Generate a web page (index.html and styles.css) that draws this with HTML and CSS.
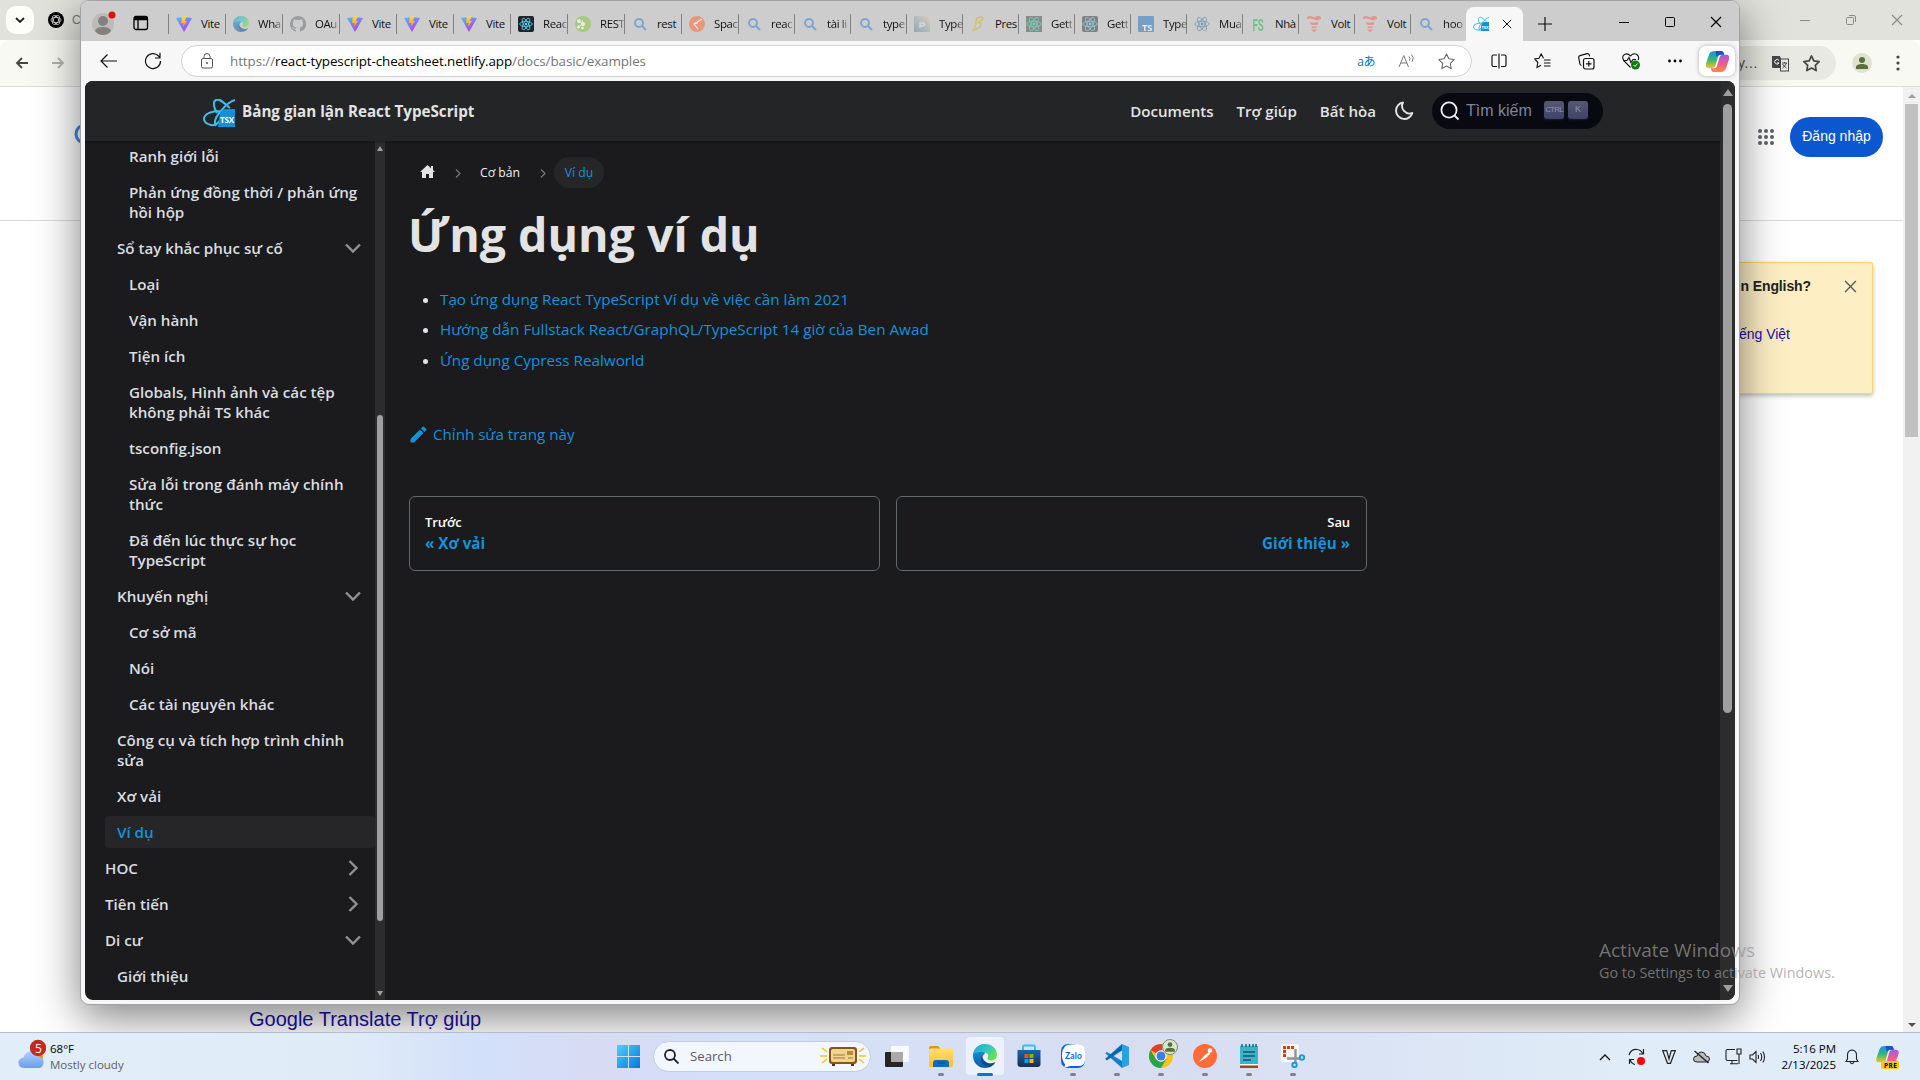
FILE: index.html
```html
<!DOCTYPE html>
<html lang="vi">
<head>
<meta charset="utf-8">
<title>Bảng gian lận React TypeScript</title>
<link rel="stylesheet" href="styles.css">
</head>
<body>
<svg class="defs" width="0" height="0" aria-hidden="true">
  <defs>
    <linearGradient id="gv" x1="0" y1="0" x2=".6" y2="1"><stop offset="0" stop-color="#41c8ff"/><stop offset="1" stop-color="#bd34fe"/></linearGradient>
    <linearGradient id="gb" x1="0" y1="0" x2="0" y2="1"><stop offset="0" stop-color="#ffe03a"/><stop offset="1" stop-color="#ffa000"/></linearGradient>
    <linearGradient id="ge1" x1="0" y1="0" x2="1" y2=".6"><stop offset="0" stop-color="#1ba7e0"/><stop offset=".55" stop-color="#2fc5c5"/><stop offset="1" stop-color="#6be04e"/></linearGradient>
    <linearGradient id="ge2" x1="0" y1="0" x2="0" y2="1"><stop offset="0" stop-color="#1b9de2"/><stop offset="1" stop-color="#0f5cae"/></linearGradient>
    <linearGradient id="gc1" x1="0" y1="0" x2="0" y2="1"><stop offset="0" stop-color="#1a8fe8"/><stop offset=".5" stop-color="#35b779"/><stop offset="1" stop-color="#f3c716"/></linearGradient>
    <linearGradient id="gc2" x1="0" y1="0" x2="0" y2="1"><stop offset="0" stop-color="#a259e6"/><stop offset=".5" stop-color="#ee5a8d"/><stop offset="1" stop-color="#fb8b4b"/></linearGradient>
    <linearGradient id="gw" x1="0" y1="0" x2="1" y2="1"><stop offset="0" stop-color="#4cd0fb"/><stop offset="1" stop-color="#0a75d6"/></linearGradient>
    <linearGradient id="gf" x1="0" y1="0" x2="0" y2="1"><stop offset="0" stop-color="#ffdf72"/><stop offset="1" stop-color="#fcbf2c"/></linearGradient>
    <linearGradient id="gs" x1="0" y1="0" x2="0" y2="1"><stop offset="0" stop-color="#1068ae"/><stop offset="1" stop-color="#1c2e52"/></linearGradient>
    <linearGradient id="gcl" x1="0" y1="0" x2="0" y2="1"><stop offset="0" stop-color="#b3d2fb"/><stop offset="1" stop-color="#6d9ceb"/></linearGradient>
    <linearGradient id="gt" x1="0" y1="1" x2="1" y2="0"><stop offset="0" stop-color="#5f8ca6"/><stop offset="1" stop-color="#e0cdb8"/></linearGradient>
    <symbol id="vite" viewBox="0 0 16 16"><path d="M0 2 8 .9 16 2 8 16Z" fill="url(#gv)"/><path d="M10.8 0 5.6 1.2 5.2 7h2.3L6.9 11 11 5H8.8Z" fill="url(#gb)"/></symbol>
    <symbol id="edge" viewBox="0 0 24 24"><path d="M12 0a12 12 0 0 0-12 12 12 12 0 0 0 12 12c3 0 6-1.200 8-3-6 2-11-1-11-6 0-2 1-4 2.500-5L12 8Z" fill="url(#ge2)"/><path d="M0 11C1 4 6 0 12 0c7 0 12 5 12 10.500 0 4-3 6-6 6-2.500 0-4-1-3.500-2.500C16 12 15 8.200 10 8 5 7.800 1 9 0 11Z" fill="url(#ge1)"/><path d="M9 11c-3 6 1 12 8 12 2.500-1 5-3.500 5.500-5-6 3.500-13 0-13.500-7Z" fill="#114a8b"/></symbol>
    <symbol id="github" viewBox="0 0 16 16"><path fill="#70757c" d="M8 0a8 8 0 0 0-2.500 15.600c.4.100.5-.2.500-.4v-1.500c-2.200.5-2.700-.9-2.700-.9-.4-1-.9-1.200-.9-1.200-.7-.5.100-.5.100-.5.800.1 1.200.8 1.200.8.700 1.200 1.900.9 2.300.7.100-.5.300-.9.500-1.100-1.800-.2-3.600-.9-3.600-4 0-.9.300-1.600.8-2.100-.1-.3-.4-1.100.1-2.200 0 0 .7-.2 2.200.8a7.500 7.500 0 0 1 4 0c1.500-1 2.200-.8 2.200-.8.500 1.100.2 1.900.1 2.200.5.500.8 1.200.8 2.100 0 3.100-1.900 3.800-3.600 4 .3.300.5.800.5 1.500v2.200c0 .2.200.5.600.4A8 8 0 0 0 8 0Z"/></symbol>
    <symbol id="react" viewBox="0 0 16 16"><g fill="none" stroke="currentColor" stroke-width=".9"><ellipse cx="8" cy="8" rx="7.300" ry="2.800"/><ellipse cx="8" cy="8" rx="7.300" ry="2.800" transform="rotate(60 8 8)"/><ellipse cx="8" cy="8" rx="7.300" ry="2.800" transform="rotate(120 8 8)"/></g><circle cx="8" cy="8" r="1.400" fill="currentColor"/></symbol>
    <symbol id="reactdark" viewBox="0 0 16 16"><rect width="16" height="16" rx="2" fill="#20232a"/><use href="#react" x="1" y="1" width="14" height="14"/></symbol>
    <symbol id="rest" viewBox="0 0 16 16"><circle cx="8" cy="8" r="8" fill="#8cc63f"/><g fill="#fff" stroke="#fff"><path d="M4 5 8 8 3 11M8 8l-1-4" fill="none"/><circle cx="4" cy="5" r="1.500"/><circle cx="8" cy="8" r="1.700"/><circle cx="3.500" cy="11" r="1.200"/><circle cx="7.500" cy="12" r="1"/></g></symbol>
    <symbol id="glass" viewBox="0 0 16 16"><g fill="none" stroke="#3a86d6" stroke-width="2"><circle cx="7" cy="7" r="4"/><path d="m10 10 4 4"/></g></symbol>
    <symbol id="space" viewBox="0 0 16 16"><circle cx="8" cy="8" r="8" fill="#ff6c37"/><path d="M13 3 5 8l4 5M5 8l4-1" stroke="#fff" stroke-width="1.200" fill="none"/></symbol>
    <symbol id="tile" viewBox="0 0 16 16"><path fill="url(#gt)" d="M0 0h16v16H0z"/><path d="M6 12V7h3a1 1 0 0 1 0 3H6" stroke="#d8f0ee" fill="none" stroke-width="1.300"/></symbol>
    <symbol id="bolt" viewBox="0 0 16 16"><path d="M4 15 7 2l5-1q2 1 0 3L8 7q4-1 3 2-1 3-5 4L2 15" fill="none" stroke="#d9b928" stroke-width="1.600"/></symbol>
    <symbol id="volt" viewBox="0 0 16 16"><path d="M1 1q3-2 7 .5Q12-1 15 1v2Q11 5 8 3.500T1 3ZM4 6q4 1.500 8 0v2.500Q9 9.500 5 8.500ZM5 10.500h6l-1 1.500H6ZM5 13q4 1 6 0-1 3-3 3t-3-3Z" fill="#f26c5c"/></symbol>
    <symbol id="tsx" viewBox="0 0 32 28"><g fill="none" stroke="#3fbcec" stroke-width="2"><path d="M32 1C27 2 22 7 17 13s-6 11-4 14M14 14C10 8 10 2 13 1c4-2 9 4 14 8M18 12C8 12 1 15 1 20c0 3 3 5 7 6 4 1 8-2 11-8"/></g><path d="M17 14q2-4 6-4h9v18H15Z" fill="#178fd5"/><text x="17" y="24" font-family="Open Sans" font-size="8" font-weight="700" fill="#fff" textLength="14">TSX</text></symbol>
    <symbol id="star" viewBox="0 0 16 16"><path d="m8 .9 2.200 4.600 5 .7-3.600 3.500.8 5L8 12.300l-4.400 2.400.8-5L.8 6.200l5-.7Z" fill="none" stroke="currentColor" stroke-linejoin="round"/></symbol>
    <symbol id="x" viewBox="0 0 12 12"><path d="m1 1 10 10M11 1 1 11" stroke="currentColor" stroke-width="1.200"/></symbol>
    <symbol id="copilot" viewBox="0 0 24 22"><path d="M10 0h6c2 0 2.500 2 3 4h-4c-2 0-2.500 2-3 4l-2 7c-.5 2-2 3-4 3H3c-3 0-4-2-3-5L3 4c1-3 3-4 7-4Z" fill="url(#gc1)"/><path d="M14 22H8c-2 0-2.500-2-3-4h4c2 0 2.500-2 3-4l2-7c.5-2 2-3 4-3h3c3 0 4 2 3 5l-3 9c-1 3-3 4-7 4Z" fill="url(#gc2)"/><path d="M10 0h6c2 0 2.500 2 3 4h-5l-3 2Z" fill="#1556c4"/></symbol>
    <symbol id="person" viewBox="0 0 20 20"><circle cx="10" cy="10" r="10" fill="#dde3cf"/><circle cx="10" cy="7" r="3" fill="#58703a"/><path d="M4 16v-2c0-2 3-3 6-3s6 1 6 3v2Z" fill="#58703a"/></symbol>
    <symbol id="down" viewBox="0 0 16 16"><path d="m1 4.500 7 7 7-7" fill="none" stroke="#909193" stroke-width="2.400"/></symbol>
    <symbol id="right" viewBox="0 0 16 16"><path d="m4.500 1 7 7-7 7" fill="none" stroke="#909193" stroke-width="2.400"/></symbol>
  </defs>
</svg>

<div class="desktop">
  <section class="chrome">
    <header class="c-tabs">
      <div class="c-left"><span class="c-menu"><svg width="10" height="6"><path d="m1 1 4 4 4-4" fill="none" stroke="#222" stroke-width="1.800"/></svg></span>
        <svg class="c-gpt" width="16" height="16"><circle cx="8" cy="8" r="8"/><g fill="none" stroke="#ddd" stroke-width=".8"><ellipse cx="8" cy="8" rx="5" ry="2.600"/><ellipse cx="8" cy="8" rx="5" ry="2.600" transform="rotate(60 8 8)"/><ellipse cx="8" cy="8" rx="5" ry="2.600" transform="rotate(120 8 8)"/></g></svg><span>C</span></div>
      <div class="c-ctl"><svg width="12" height="12"><path d="M1 6.500h10" stroke="#8b8c87"/></svg><svg width="12" height="12" fill="none" stroke="#8b8c87"><rect x="1.500" y="3.500" width="7" height="7" rx="1"/><path d="M4 1.500h5q1.500 0 1.500 1.500v5"/></svg><svg width="12" height="12" color="#8b8c87"><use href="#x"/></svg></div>
    </header>
    <div class="c-bar">
      <div class="c-nav"><svg width="14" height="12" fill="none" stroke="#44483f" stroke-width="1.800"><path d="M13 6H2M7 1 2 6l5 5"/></svg><svg width="14" height="12" fill="none" stroke="#b0b1aa" stroke-width="1.800"><path d="M1 6h11M7 1l5 5-5 5"/></svg></div>
      <div class="c-addr"><span>vy...</span><svg width="17" height="17"><path d="M0 1h8l4 12H1q-1 0-1-1Z" fill="#44474a"/><rect x="8.500" y="4" width="8" height="12" fill="#e9e9e3" stroke="#44474a"/><path d="M10 8h5M12.500 7v1m2 0q-1 3-4 5m0-4q1 2 4 4" stroke="#44474a" fill="none"/><path d="M7 5.500A2.300 2.300 0 1 0 7 8H5" stroke="#fff" fill="none"/></svg><svg class="c-star" width="17" height="17"><use href="#star"/></svg></div>
      <svg width="20" height="20"><use href="#person"/></svg>
      <svg width="4" height="16" fill="#444"><circle cx="2" cy="2" r="1.600"/><circle cx="2" cy="8" r="1.600"/><circle cx="2" cy="14" r="1.600"/></svg>
    </div>
    <div class="c-view">
      <div class="c-page">
        <div class="g-head"><svg class="g-logo" width="22" height="22"><circle cx="11" cy="11" r="9" fill="none" stroke="#4285f4" stroke-width="3"/></svg>
          <svg class="g-grid" width="16" height="16" fill="#5f6368"><g id="r3"><circle cx="2" cy="2" r="2"/><circle cx="8" cy="2" r="2"/><circle cx="14" cy="2" r="2"/></g><use href="#r3" y="6"/><use href="#r3" y="12"/></svg><span class="g-sign">Đăng nhập</span></div>
        <div class="g-note"><div class="g-q"><b>in English?</b><svg width="13" height="13" color="#555"><use href="#x"/></svg></div><div class="g-lang">Tiếng Việt</div></div>
        <div class="g-foot">Google Translate Trợ giúp</div>
      </div>
      <div class="c-scroll"><i class="up"></i><div class="c-thumb"></div><i class="dn"></i></div>
    </div>
  </section>

  <section class="win">
    <header class="tabs">
      <div class="t-prof"><svg width="24" height="26"><circle cx="11" cy="14" r="11" fill="#bdbbb9"/><circle cx="11" cy="11" r="5" fill="#85807d"/><path d="M3 21q1-4 8-4t8 4q-3 4-8 4t-8-4Z" fill="#85807d"/><circle cx="20" cy="5" r="3.500" fill="#e00b0b"/></svg>
      <svg width="16" height="16" fill="none" stroke="#000" stroke-width="1.300"><rect x="1" y="1.500" width="13.500" height="13" rx="2"/><path d="M1 4.500h13.500M5 4.500v10" /><path d="M1.500 3h12.500" stroke-width="3"/></svg></div>
      <div class="tab w"><svg><use href="#vite"/></svg><span>Vite</span></div>
      <div class="tab w dim"><svg><use href="#edge"/></svg><span class="f">Wha</span></div>
      <div class="tab w dim"><svg><use href="#github"/></svg><span class="f">OAu</span></div>
      <div class="tab w"><svg><use href="#vite"/></svg><span>Vite</span></div>
      <div class="tab w"><svg><use href="#vite"/></svg><span>Vite</span></div>
      <div class="tab w"><svg><use href="#vite"/></svg><span>Vite</span></div>
      <div class="tab w"><svg color="#61dafb"><use href="#reactdark"/></svg><span class="f">Reac</span></div>
      <div class="tab w dim"><svg><use href="#rest"/></svg><span class="f">REST</span></div>
      <div class="tab w dim"><svg><use href="#glass"/></svg><span>rest</span></div>
      <div class="tab w dim"><svg><use href="#space"/></svg><span class="f">Spac</span></div>
      <div class="tab dim"><svg><use href="#glass"/></svg><span class="f">reac</span></div>
      <div class="tab dim"><svg><use href="#glass"/></svg><span class="f">tài li</span></div>
      <div class="tab dim"><svg><use href="#glass"/></svg><span class="f">type</span></div>
      <div class="tab dim"><svg><use href="#tile"/></svg><span class="f">Type</span></div>
      <div class="tab dim"><svg><use href="#bolt"/></svg><span>Pres</span></div>
      <div class="tab dim"><svg><rect width="16" height="16" fill="#555"/><g color="#2fd0a5"><use href="#react"/></g></svg><span class="f">Gett</span></div>
      <div class="tab dim"><svg><rect width="16" height="16" rx="2" fill="#444"/><g color="#61bfdb"><use href="#react"/></g></svg><span class="f">Gett</span></div>
      <div class="tab dim"><svg><rect width="16" height="16" rx="1" fill="#3178c6"/><text x="4" y="14.500" font-family="Open Sans" font-size="9.500" font-weight="700" fill="#fff">TS</text></svg><span class="f">Type</span></div>
      <div class="tab dim"><svg color="#3d7a9e"><use href="#react"/></svg><span class="f">Mua</span></div>
      <div class="tab dim"><svg><text x="2.500" y="14.500" font-family="Roboto" font-size="17" font-weight="700" fill="#2fb457" textLength="11" lengthAdjust="spacingAndGlyphs">FS</text></svg><span>Nhà</span></div>
      <div class="tab dim"><svg><use href="#volt"/></svg><span>Volt</span></div>
      <div class="tab dim"><svg><use href="#volt"/></svg><span>Volt</span></div>
      <div class="tab dim"><svg><use href="#glass"/></svg><span class="f">hoo</span></div>
      <div class="tab active"><svg><use href="#tsx"/></svg><svg class="tx"><use href="#x"/></svg></div>
      <svg class="plus" width="14" height="14"><path d="M7 0v14M0 7h14" stroke="#111" stroke-width="1.200"/></svg>
      <div class="ctl"><svg width="12" height="12"><path d="M1 6.500h10" stroke="#000"/></svg><svg width="12" height="12"><rect x="1.500" y="1.500" width="9" height="9" rx="1" fill="none" stroke="#000"/></svg><svg width="12" height="12"><use href="#x"/></svg></div>
    </header>
    <div class="bar">
      <div class="b-nav"><svg width="17" height="14" fill="none" stroke="#111" stroke-width="1.200"><path d="M17 7H1M7.500.5 1 7l6.500 6.500"/></svg><svg width="18" height="18" fill="none" stroke="#111" stroke-width="1.200"><path d="M16.500 9A7.500 7.500 0 1 1 14.500 4L16 6M16 .8V6h-5"/></svg></div>
      <div class="addr"><svg width="12" height="16" fill="none" stroke="#555"><rect x=".5" y="5.500" width="11" height="9.500" rx="1.500"/><path d="M3 5.500V3.500a3 3 0 0 1 6 0v2"/><circle cx="6" cy="10" r=".6" fill="#555"/></svg>
        <span class="url">https://<b>react-typescript-cheatsheet.netlify.app</b>/docs/basic/examples</span>
        <span class="tr">aあ</span>
        <svg class="read" width="18" height="16" fill="none" stroke="#777"><path d="M1 14 5.800 2.500 10.500 14M2.800 10h6M11 3.500q1.500 1.500.5 4M13.500 1.500q3 3 .8 7"/></svg>
        <svg class="fav" width="17" height="17"><use href="#star"/></svg></div>
      <div class="b-ico">
        <svg width="16" height="16" fill="none" stroke="#111" stroke-width="1.200"><path d="M6 2H2.500Q1 2 1 3.500v8.500Q1 13.500 2.500 13.500H6M10 2h3.500Q15 2 15 3.500v8.500q0 1.500-1.500 1.500H10M8 .5v15"/></svg>
        <svg width="17" height="16" fill="none" stroke="#111" stroke-width="1.100"><path d="M9.500 5.200 7.200.9 5 5.300l-4.400.6L3.800 9.300 3 14.500l4-2.300M10 7h6.500M10 10h6.500M10 13h6.500"/></svg>
        <svg width="17" height="17" fill="none" stroke="#111" stroke-width="1.200"><rect x="5.500" y="5.500" width="10.500" height="10.500" rx="2"/><path d="M3.500 12.500Q2 12 1.800 10.500L.7 4.500Q.6 3 2 2.700l7-2Q10.800.4 11.300 2l.3 1.300M10.800 8v5.500M8 10.800h5.500"/></svg>
        <svg width="18" height="17"><path d="M8.500 14.500 2 8Q-1 3 3 1.200 6 0 8.500 3 11-.1 14.500 1.200 18 4 16 7M1 7.500h4l2-3 2 5 2-3h3" fill="none" stroke="#111" stroke-width="1.100"/><circle cx="13.500" cy="12" r="4.500" fill="#107c10"/><path d="m11.500 12 1.500 1.500 2.500-3" stroke="#fff" fill="none"/></svg>
        <svg width="16" height="16"><circle cx="2.500" cy="8" r="1.400"/><circle cx="8" cy="8" r="1.400"/><circle cx="13.500" cy="8" r="1.400"/></svg>
      </div>
      <span class="cop"><svg width="23" height="21"><use href="#copilot"/></svg></span>
    </div>
    <div class="view">
      <div class="site">
        <nav class="navbar">
          <svg class="logo" width="32" height="28"><use href="#tsx"/></svg><b class="brand">Bảng gian lận React TypeScript</b>
          <div class="links"><span>Documents</span><span>Trợ giúp</span><span>Bất hòa</span></div>
          <svg class="moon" width="20" height="20"><path d="M9 1.500A8.300 8.300 0 1 0 18.300 12 7.500 7.500 0 0 1 9 1.500Z" fill="none" stroke="#e3e3e3" stroke-width="1.900" stroke-linejoin="round"/></svg>
          <div class="search"><svg width="20" height="20" fill="none" stroke="#f0f1f4" stroke-width="1.800"><circle cx="9" cy="9" r="7.600"/><path d="m14.500 14.500 4 4"/></svg><span>Tìm kiếm</span><kbd class="narrow">CTRL</kbd><kbd>K</kbd></div>
        </nav>
        <div class="docs">
          <aside class="menu">
            <ul>
              <li class="l3">Ranh giới lỗi</li>
              <li class="l3">Phản ứng đồng thời / phản ứng<br>hồi hộp</li>
              <li class="l2">Sổ tay khắc phục sự cố<svg><use href="#down"/></svg></li>
              <li class="l3">Loại</li>
              <li class="l3">Vận hành</li>
              <li class="l3">Tiện ích</li>
              <li class="l3">Globals, Hình ảnh và các tệp<br>không phải TS khác</li>
              <li class="l3">tsconfig.json</li>
              <li class="l3">Sửa lỗi trong đánh máy chính<br>thức</li>
              <li class="l3">Đã đến lúc thực sự học<br>TypeScript</li>
              <li class="l2">Khuyến nghị<svg><use href="#down"/></svg></li>
              <li class="l3">Cơ sở mã</li>
              <li class="l3">Nói</li>
              <li class="l3">Các tài nguyên khác</li>
              <li class="l2">Công cụ và tích hợp trình chỉnh<br>sửa</li>
              <li class="l2">Xơ vải</li>
              <li class="l2 on">Ví dụ</li>
              <li class="l1">HOC<svg><use href="#right"/></svg></li>
              <li class="l1">Tiên tiến<svg><use href="#right"/></svg></li>
              <li class="l1">Di cư<svg><use href="#down"/></svg></li>
              <li class="l2">Giới thiệu</li>
            </ul>
            <div class="m-scroll"><i class="up"></i><div class="m-thumb"></div><i class="dn"></i></div>
          </aside>
          <main>
            <div class="crumbs">
              <svg class="home" width="15" height="13"><path d="M7.500 0 0 7h2v6h4V9h3v4h4V7h2l-2-1.900V1h-2v2.200Z" fill="#e3e3e3"/></svg>
              <svg class="sep" width="6" height="9"><path d="m1 .5 4 4-4 4" fill="none" stroke="#777" stroke-width="1.200"/></svg>
              <span class="cb">Cơ bản</span>
              <svg class="sep s2" width="6" height="9"><path d="m1 .5 4 4-4 4" fill="none" stroke="#777" stroke-width="1.200"/></svg>
              <span class="pill">Ví dụ</span>
            </div>
            <h1>Ứng dụng ví dụ</h1>
            <ul class="list">
              <li><a>Tạo ứng dụng React TypeScript Ví dụ về việc cần làm 2021</a></li>
              <li><a>Hướng dẫn Fullstack React/GraphQL/TypeScript 14 giờ của Ben Awad</a></li>
              <li><a>Ứng dụng Cypress Realworld</a></li>
            </ul>
            <div class="edit"><svg width="17" height="17" viewBox="0 0 17 17"><path d="M.5 13v3.500H4L13.500 7 10 3.500ZM16.200 4.300a1 1 0 0 0 0-1.300L14 .8a1 1 0 0 0-1.300 0L11 2.500 14.500 6Z" fill="#1492dc"/></svg><span>Chỉnh sửa trang này</span></div>
            <div class="pager"><div class="pg"><small>Trước</small><b>« Xơ vải</b></div><div class="pg next"><small>Sau</small><b>Giới thiệu »</b></div></div>
          </main>
        </div>
      </div>
      <div class="scroll"><i class="up"></i><div class="thumb"></div><i class="dn"></i></div>
    </div>
  </section>

  <div class="watermark"><div class="w1">Activate Windows</div><div class="w2">Go to Settings to activate Windows.</div></div>

  <footer class="taskbar">
    <div class="weather"><svg width="28" height="34"><circle cx="19" cy="18" r="6" fill="#f58a1f"/><path d="M6 29q-6-.5-5.500-6 .5-4 5-4.500Q8 12 13.500 12t8 6Q26 19 25.500 24q-.5 5-5 5Z" fill="url(#gcl)"/><circle cx="20" cy="9" r="8.200" fill="#c42b1c"/><text x="17" y="13.500" font-family="Open Sans" font-size="12" fill="#fff">5</text></svg><div><div>68°F</div><div class="wc">Mostly cloudy</div></div></div>
    <div class="apps">
      <svg class="start" width="23" height="23" fill="url(#gw)"><path d="M0 0h11v11H0zM12 0h11v11H12zM0 12h11v11H0zM12 12h11v11H12z"/></svg>
      <div class="find"><svg width="15" height="15" fill="none" stroke="#222" stroke-width="1.800"><circle cx="6" cy="6" r="5"/><path d="m9.500 9.500 5 5"/></svg><span>Search</span>
        <svg class="radio" width="46" height="20"><path d="m2 2 5 4M0 10h7M2 17l5-4M44 2l-5 4M46 10h-7M44 17l-5-4" stroke="#f5c518" stroke-width="1.500"/><rect x="9" y="1" width="28" height="17" rx="3" fill="#8a5416"/><rect x="11" y="3" width="24" height="13" rx="2" fill="#efd58f"/><path d="M13 9h12M13 12h12M28 12h5" stroke="#a9772c"/><path d="M27 5h6v4h-6z" fill="#b98a3c"/><path d="M12 18h3v2h-3zM31 18h3v2h-3z" fill="#5a3208"/></svg></div>
      <div class="app"><svg width="24" height="24"><rect x="0" y="8" width="18" height="15" rx="1" fill="#262626"/><rect x="6" y="2" width="18" height="16" rx="1" fill="#fff" opacity=".85"/><path d="M6 8h12v10H6z" fill="#aaa"/></svg></div>
      <div class="app run"><svg width="24" height="24"><path d="M0 4q0-2 2-2h7l3 3v4H0Z" fill="#d99a10"/><rect y="4.500" width="24" height="18.500" rx="1.500" fill="url(#gf)"/><path d="M4 23v-4q0-3 3-3h10q3 0 3 3v4Z" fill="#0f6cbd"/><path d="M8 19h8" stroke="#0a4a86"/></svg></div>
      <div class="app run cur"><svg width="24" height="24"><use href="#edge"/></svg></div>
      <div class="app"><svg width="24" height="24"><path d="M6 7V3q0-1.500 1.500-1.500h9Q18 1.500 18 3v4" fill="none" stroke="#35c1f1" stroke-width="2"/><path d="M.5 6h23v14q0 3-3 3h-17q-3 0-3-3Z" fill="url(#gs)"/><path d="M7.500 10h4v4h-4z" fill="#f25022"/><path d="M12.500 10h4v4h-4z" fill="#7fba00"/><path d="M7.500 15h4v4h-4z" fill="#00a4ef"/><path d="M12.500 15h4v4h-4z" fill="#ffb900"/></svg></div>
      <div class="app run"><svg width="24" height="24"><rect width="24" height="24" rx="7" fill="#0a63e6"/><path d="M5 1.500Q9 0 17 0q7 0 7 7v9q0 6-7 6H9q-3 1.500-6 1 1.500-1 1-2.500-3-4-3-9.500 0-6 4-9.500Z" fill="#fff"/><text x="4" y="14.500" font-family="Lato" font-size="8.500" font-weight="700" fill="#0a63e6" textLength="17">Zalo</text></svg></div>
      <div class="app run"><svg width="24" height="24"><path d="M17 0 5.500 11 2 8.300.3 9.200 17 24V17L3 5" fill="none"/><path d="M17 24 .3 9.200 2 8 17 17Z" fill="#1380c6"/><path d="M0 15 17 0v6.500L2 16.200Z" fill="#0b67ab"/><path d="m17 0 7 3v18l-7 3Z" fill="#2a9fe3"/></svg></div>
      <div class="app run"><svg class="wide" width="30" height="30" viewBox="0 -5 30 30"><circle cx="12" cy="12" r="12" fill="#fbc116"/><path d="M12 12 1.600 6A12 12 0 0 1 22.400 6H12Z" fill="#e33b2e"/><path d="M1.600 6A12 12 0 0 0 12 24l5.200-9-10.400 0Z" fill="#2ba24c"/><circle cx="12" cy="12" r="5.700" fill="#fff"/><circle cx="12" cy="12" r="4.500" fill="#3b7ded"/><use href="#person" x="13" y="-5" width="16" height="16"/><circle cx="21" cy="3" r="7.500" fill="none" stroke="#7b8a66"/></svg></div>
      <div class="app run"><svg width="24" height="24"><circle cx="12" cy="12" r="12" fill="#ff6c37"/><path d="m5 19 7-8 4-3 1 2-4 4-7 4Z" fill="#fff"/><circle cx="17" cy="6.500" r="2.300" fill="#fff"/></svg></div>
      <div class="app run"><svg width="24" height="24"><rect x="3" y="2" width="18" height="19" fill="#3bb3c9"/><path d="M5 0v3M9 0v3M12.500 0v3M16 0v3M19 0v3" stroke="#1b5f70" stroke-width="1.500"/><path d="M6 8h12M6 12h12M6 16h8" stroke="#0f5a70" stroke-width="1.500"/><path d="M3 20h18v1.500H3z" fill="#fff"/><path d="M3 21.500h18V24H3z" fill="#9c4a12"/></svg></div>
      <div class="app run"><svg width="24" height="24"><rect width="18" height="18" rx="2" fill="#f7f7f7"/><path d="M3.500 13V3.500H13" fill="none" stroke="#d13f1a" stroke-width="3" stroke-dasharray="3 1"/><path d="M6 14.500h14M14.500 5v14" stroke="#8d949c" stroke-width="2.400"/><circle cx="21" cy="13.500" r="2.200" fill="none" stroke="#1a9ad6" stroke-width="2"/><circle cx="13.500" cy="21" r="2.200" fill="none" stroke="#1a9ad6" stroke-width="2"/></svg></div>
    </div>
    <div class="tray">
      <svg width="12" height="8"><path d="m1 7 5-5 5 5" fill="none" stroke="#111" stroke-width="1.300"/></svg>
      <svg width="18" height="18"><path d="M1 7q2-6 8-5.500 4 .3 6 4.500M15.500 1v5H11M1.500 16v-4.500H6M2 12q2 4 5 4.500" fill="none" stroke="#222" stroke-width="1.200"/><circle cx="13" cy="13" r="4" fill="#f00"/></svg>
      <svg width="14" height="14"><path d="M.7.700h4L7 9 9.300.700h4L8.500 13.300h-3Z" fill="none" stroke="#222" stroke-width="1.200"/></svg>
      <svg width="17" height="14"><path d="M4 12q-3.500 0-3.500-3T4 6q1-4 4.500-4T13 6q3.500 0 3.500 3T13 12Z" fill="#bbb" stroke="#222"/><path d="m1.500 1 14 12" stroke="#222" stroke-width="1.400"/></svg>
      <svg width="17" height="17" fill="none" stroke="#222" stroke-width="1.100"><path d="M10 1.500H2.500Q1 1.500 1 3v8q0 1.500 1.500 1.500h10M5 15.800h8M7 12.500v3M12 1h4v5h-4ZM14 6v10"/></svg>
      <svg width="17" height="14" fill="none" stroke="#222" stroke-width="1.100"><path d="M1 5h2.500L7 1.500v11L3.500 9H1ZM9 5q1 2 0 4M11.500 3q2.500 4 0 8M13.800 1.500q3.500 5.500 0 11"/></svg>
      <div class="clock"><div>5:16 PM</div><div>2/13/2025</div></div>
      <svg width="14" height="16"><path d="M7 1Q2.500 1.500 2.500 6v4L1 12.500h12L11.500 10V6Q11.500 1.500 7 1ZM5 13q2 3.500 4 0" fill="none" stroke="#222" stroke-width="1.100"/></svg>
      <svg width="24" height="24"><use href="#copilot" width="23" height="20" y="1"/><rect x="5" y="16" width="18" height="8" rx="2" fill="#fbc81b"/><text x="8" y="22.500" font-family="Open Sans" font-weight="700" font-size="6.500" textLength="13">PRE</text></svg>
    </div>
  </footer>
</div>
</body>
</html>
```
FILE: styles.css
```css
* { box-sizing: border-box; }
body { margin: 0; font-family: "Open Sans", "Noto Sans CJK JP", sans-serif; }
ul { margin: 0; padding: 0; list-style: none; }
svg { display: block; flex: none; }
.defs { position: absolute; }
.desktop { position: relative; width: 1920px; height: 1080px; overflow: hidden; background: #fff; }

/* scroll arrows */
i { width: 0; height: 0; border: 4px solid transparent; }
i.up { border-top: 0; border-bottom: 7px solid #9f9f9f; }
i.dn { border-bottom: 0; border-top: 7px solid #9f9f9f; }

/* background browser */
.chrome { position: absolute; inset: 0 0 48px; display: flex; flex-direction: column; font-family: "Liberation Sans", sans-serif; }
.c-tabs { height: 40px; background: #e1e2dc; display: flex; justify-content: space-between; }
.c-left { display: flex; align-items: center; padding-left: 6px; font-size: 12px; color: #777; }
.c-menu { width: 28px; height: 28px; border-radius: 10px; background: #fdfdf9; display: grid; place-items: center; }
.c-gpt { margin: 0 8px 0 14px; }
.c-ctl { display: flex; gap: 34px; padding: 14px 17px 0 0; }
.c-bar { height: 47px; background: #f9f9f4; border-bottom: 1px solid #dcddd6; border-radius: 10px 10px 0 0; display: flex; align-items: center; padding: 0 20px 0 15px; }
.c-nav { display: flex; gap: 22px; }
.c-addr { margin-left: auto; margin-right: 16px; width: 216px; height: 34px; border-radius: 17px; background: #e9e9e3; display: flex; align-items: center; justify-content: flex-end; padding-right: 16px; font-size: 14px; color: #505050; gap: 14px; }
.c-addr span { letter-spacing: .6px; }
.c-star { color: #444; stroke-width: 1.600; }
.c-bar > svg:last-child { margin-left: 24px; }
.c-view { flex: 1; display: flex; background: #fff; }
.c-page { flex: 1; display: flex; flex-direction: column; align-items: stretch; }
.g-head { height: 134px; border-bottom: 1px solid #dadce0; display: flex; align-items: flex-start; padding: 30px 20px 0 74px; }
.g-logo { margin-top: 6px; }
.g-grid { margin: 12px 16px 0 auto; }
.g-sign { width: 93px; height: 40px; border-radius: 20px; background: #0b57d0; color: #fff; font-size: 14px; line-height: 38px; text-align: center; }
.g-note { width: 200px; height: 132px; margin: 41px 30px 0 auto; background: #fdeec3; border: 1px solid #fdd663; border-radius: 2px; box-shadow: 0 2px 4px rgba(0,0,0,.25); font-size: 14px; padding: 15px 15px 0 0; }
.g-q { display: flex; align-items: center; justify-content: flex-end; gap: 33px; height: 16px; color: #222; letter-spacing: -.1px; }
.g-lang { color: #1a0dab; text-align: right; padding-right: 67px; line-height: 16px; margin-top: 32px; }
.g-foot { margin: auto 0 1px 249px; color: #1a0dab; font-size: 20px; line-height: 23px; }
.c-scroll { width: 17px; background: #f1f1f1; display: flex; flex-direction: column; align-items: center; padding: 7px 0 5px; }
.c-scroll .up { border-bottom-width: 4px; }
.c-scroll .dn { margin-top: auto; border-top: 4px solid #505050; }
.c-thumb { width: 13px; height: 333px; margin-top: 6px; background: #c1c1c1; }

/* foreground browser */
.win { position: absolute; left: 80px; top: 0; width: 1660px; height: 1005px; border: 1px solid #a3a3a3; border-radius: 9px; background: #f7f7f7; box-shadow: 0 12px 44px rgba(0,0,0,.5); display: flex; flex-direction: column; }
.tabs { height: 40px; background: #cdcdcd; border-radius: 8px 8px 0 0; display: flex; align-items: flex-start; }
.t-prof { width: 87px; display: flex; padding: 9px 0 0 11px; gap: 17px; align-items: center; }
.tab { width: 56px; height: 20px; margin-top: 13px; border-left: 1px solid #808080; display: flex; align-items: center; padding-left: 7px; gap: 9px; font-size: 11.400px; line-height: 20px; color: #111; white-space: nowrap; letter-spacing: -.35px; }
.tab.w { width: 57px; }
.tab .f { -webkit-mask-image: linear-gradient(90deg, #000 70%, rgba(0,0,0,.3)); mask-image: linear-gradient(90deg, #000 70%, rgba(0,0,0,.3)); }
.tab svg { width: 16px; height: 16px; }
.tab.dim svg { opacity: .55; }
.tab.active { width: 57px; height: 34px; margin-top: 6px; background: #f7f7f7; border: 0; border-radius: 8px 8px 0 0; gap: 13px; }
.tab .tx { width: 10px; height: 10px; }
.plus { margin: 16px 0 0 15px; }
.ctl { display: flex; gap: 34px; margin: 15px 17px 0 auto; }
.bar { height: 40px; display: flex; align-items: center; padding: 0 4px 0 19px; }
.b-nav { display: flex; gap: 27px; align-items: center; }
.addr { width: 1291px; height: 32px; margin-left: 19px; border: 1px solid #d2d2d2; border-radius: 16px; background: #fff; display: flex; align-items: center; padding: 0 16px 0 19px; }
.url { margin-left: 17px; margin-right: auto; font-size: 13.400px; color: #767676; letter-spacing: -.08px; }
.url b { font-weight: 400; color: #000; }
.tr { color: #0078d4; font-size: 12px; letter-spacing: -.5px; }
.read { margin: 0 22px 0 23px; }
.fav { color: #666; }
.b-ico { display: flex; align-items: center; justify-content: space-between; width: 192px; margin-left: 19px; }
.cop { width: 36px; height: 30px; margin-left: auto; border-radius: 7px; background: #fff; box-shadow: 0 0 4px rgba(0,0,0,.3); display: grid; place-items: center; }
.view { flex: 1; margin: 0 4px 4px; display: flex; border-radius: 8px; overflow: hidden; background: #1b1b1d; }
.scroll { width: 15px; background: #2c2c2c; display: flex; flex-direction: column; align-items: center; padding: 8px 0 8px; }
.scroll i { border-left-width: 5px; border-right-width: 5px; }
.thumb { width: 9px; height: 609px; border-radius: 5px; margin-top: 8px; background: #9f9f9f; }
.scroll .dn, .m-scroll .dn { margin-top: auto; }
.site { flex: 1; display: flex; flex-direction: column; color: #e3e3e3; }
.navbar { height: 60px; background: #242526; display: flex; align-items: center; padding: 0 117px 0 118px; position: relative; box-shadow: 0 1px 2px rgba(0,0,0,.3); }
.logo { margin-top: 3px; }
.brand { font-size: 15.200px; margin-left: 7px; line-height: 20px; }
.links { display: flex; margin-left: auto; font-weight: 600; font-size: 15.100px; gap: 23px; }
.moon { margin: 0 18px; }
.search { width: 171px; height: 36px; border-radius: 18px; background: #090a11; display: flex; align-items: center; padding-left: 8px; font-family: "Liberation Sans", sans-serif; font-size: 16px; color: #7f8497; }
.search span { margin: 0 12px 0 6px; width: 66px; white-space: nowrap; }
kbd { width: 20px; height: 18px; margin-right: 4px; border-radius: 3px; background: linear-gradient(#565872, #40426a); box-shadow: 0 1px 2px #16193a; font: 9px/17px "Liberation Sans", sans-serif; color: #8f93b3; text-align: center; margin-bottom: 2px; }
.narrow { font-size: 8px; letter-spacing: -.8px; }
.docs { flex: 1; display: flex; min-height: 0; }
.menu { width: 300px; display: flex; overflow: hidden; }
.menu ul { width: 290px; padding-left: 20px; margin-top: -1px; }
.menu li { position: relative; min-height: 32px; margin-bottom: 4px; line-height: 20px; padding: 6px 0; font-size: 15.150px; font-weight: 600; color: #dadde1; white-space: nowrap; }
.menu .l2 { padding-left: 12px; }
.menu .l3 { padding-left: 24px; }
.menu .on { color: #1492dc; background: #262628; border-radius: 4px; }
.menu li svg { position: absolute; right: 14px; top: 8px; width: 16px; height: 16px; }
.m-scroll { width: 10px; background: #2c2c2c; display: flex; flex-direction: column; align-items: center; padding: 5px 0 4px; }
.m-scroll i { border-left-width: 3px; border-right-width: 3px; border-top-width: 0; border-bottom-width: 5px; }
.m-scroll .dn { border-top-width: 5px; border-bottom-width: 0; }
.m-thumb { width: 6px; height: 506px; border-radius: 3px; background: #9f9f9f; margin-top: 264px; }
main { padding: 16px 0 0 24px; width: 983px; }
.crumbs { display: flex; align-items: center; height: 31px; font-size: 12.200px; }
.home { margin: 0 20px 3px 11px; }
.cb { width: 42px; margin-left: 19px; color: #f0f0f0; white-space: nowrap; }
.s2 { margin-left: 18px; }
.sep { margin-top: 2px; }
.pill { width: 50px; height: 31px; margin-left: 8px; border-radius: 16px; background: #262628; color: #1492dc; text-align: center; }
.cb, .pill { line-height: 32px; }
h1 { margin: 16px 0 0; font-size: 46.500px; line-height: 60px; height: 60px; font-weight: 700; white-space: nowrap; margin-left: -1px; }
.list { margin-top: 22px; padding-left: 31px; list-style: disc; font-size: 15.250px; }
.list li { height: 26.400px; line-height: 26.400px; margin-bottom: 4px; }
a, .edit { color: #1492dc; }
.edit { display: flex; align-items: center; height: 24px; margin-top: 49px; font-size: 15.150px; gap: 6px; padding-left: 1px; }
.pager { display: grid; grid-template-columns: 471px 471px; gap: 16px; margin-top: 50px; }
.pg { height: 75px; border: 1px solid #606770; border-radius: 6px; padding: 16px 16px 16px 15px; display: flex; flex-direction: column; }
.pg small { font-size: 13px; font-weight: 600; line-height: 18px; color: #fff; letter-spacing: -.1px; }
.pg b { font-size: 15.200px; line-height: 24px; color: #1492dc; }
.next { text-align: right; }

/* activation notice floats over every window */
.watermark { position: absolute; left: 1599px; top: 936px; color: rgba(150,150,150,.72); white-space: nowrap; }
.w1 { font-size: 19px; line-height: 28px; }
.w2 { font-size: 14.400px; line-height: 17px; }

/* taskbar */
.taskbar { position: absolute; left: 0; right: 0; bottom: 0; height: 48px; border-top: 1px solid #b4bdca; background: linear-gradient(90deg, #e1edf8 0, #e0ebf8 18%, #d2e0f9 25%, #d8dbf4 31%, #d2e0f8 38%, #d7dff5 50%, #d8def1 62%, #dce6f5 75%, #e0ecf8 85%); }
.taskbar { display: flex; align-items: center; font-size: 11.500px; }
.weather { width: 617px; display: flex; padding-left: 18px; gap: 4px; line-height: 16px; }
.weather svg { margin-top: -2px; }
.wc { color: #5d6269; }
.apps { display: flex; align-items: center; height: 47px; }
.find { width: 218px; height: 31px; margin: 0 4px 1px 13px; border-radius: 16px; background: #f2f6fd; border: 1px solid #c3cbdc; display: flex; align-items: center; padding: 0 4px 0 10px; font-size: 13.200px; color: #5c5c5c; }
.find span { margin-left: 11px; }
.radio { margin-left: auto; }
.app { position: relative; width: 44px; height: 47px; display: flex; justify-content: center; padding-top: 7px; }
.app > svg { margin-top: 4px; }
.app > svg.wide { margin: -1px 0 0 6px; }
.run::after { content: ""; position: absolute; left: 19px; bottom: 4px; width: 6px; height: 3px; border-radius: 2px; background: #7d828c; }
.cur::before { content: ""; position: absolute; left: 3px; top: 4px; width: 38px; height: 38px; border-radius: 4px; background: #edf1fb; }
.cur svg { position: relative; }
.cur::after { left: 14px; width: 16px; background: #0078d4; }
.tray { margin-left: auto; display: grid; grid-template-columns: repeat(5, 32px) 16px 71px 32px 40px; align-items: center; justify-items: center; padding-right: 12px; }
.clock { line-height: 16px; text-align: right; justify-self: end; }
```
